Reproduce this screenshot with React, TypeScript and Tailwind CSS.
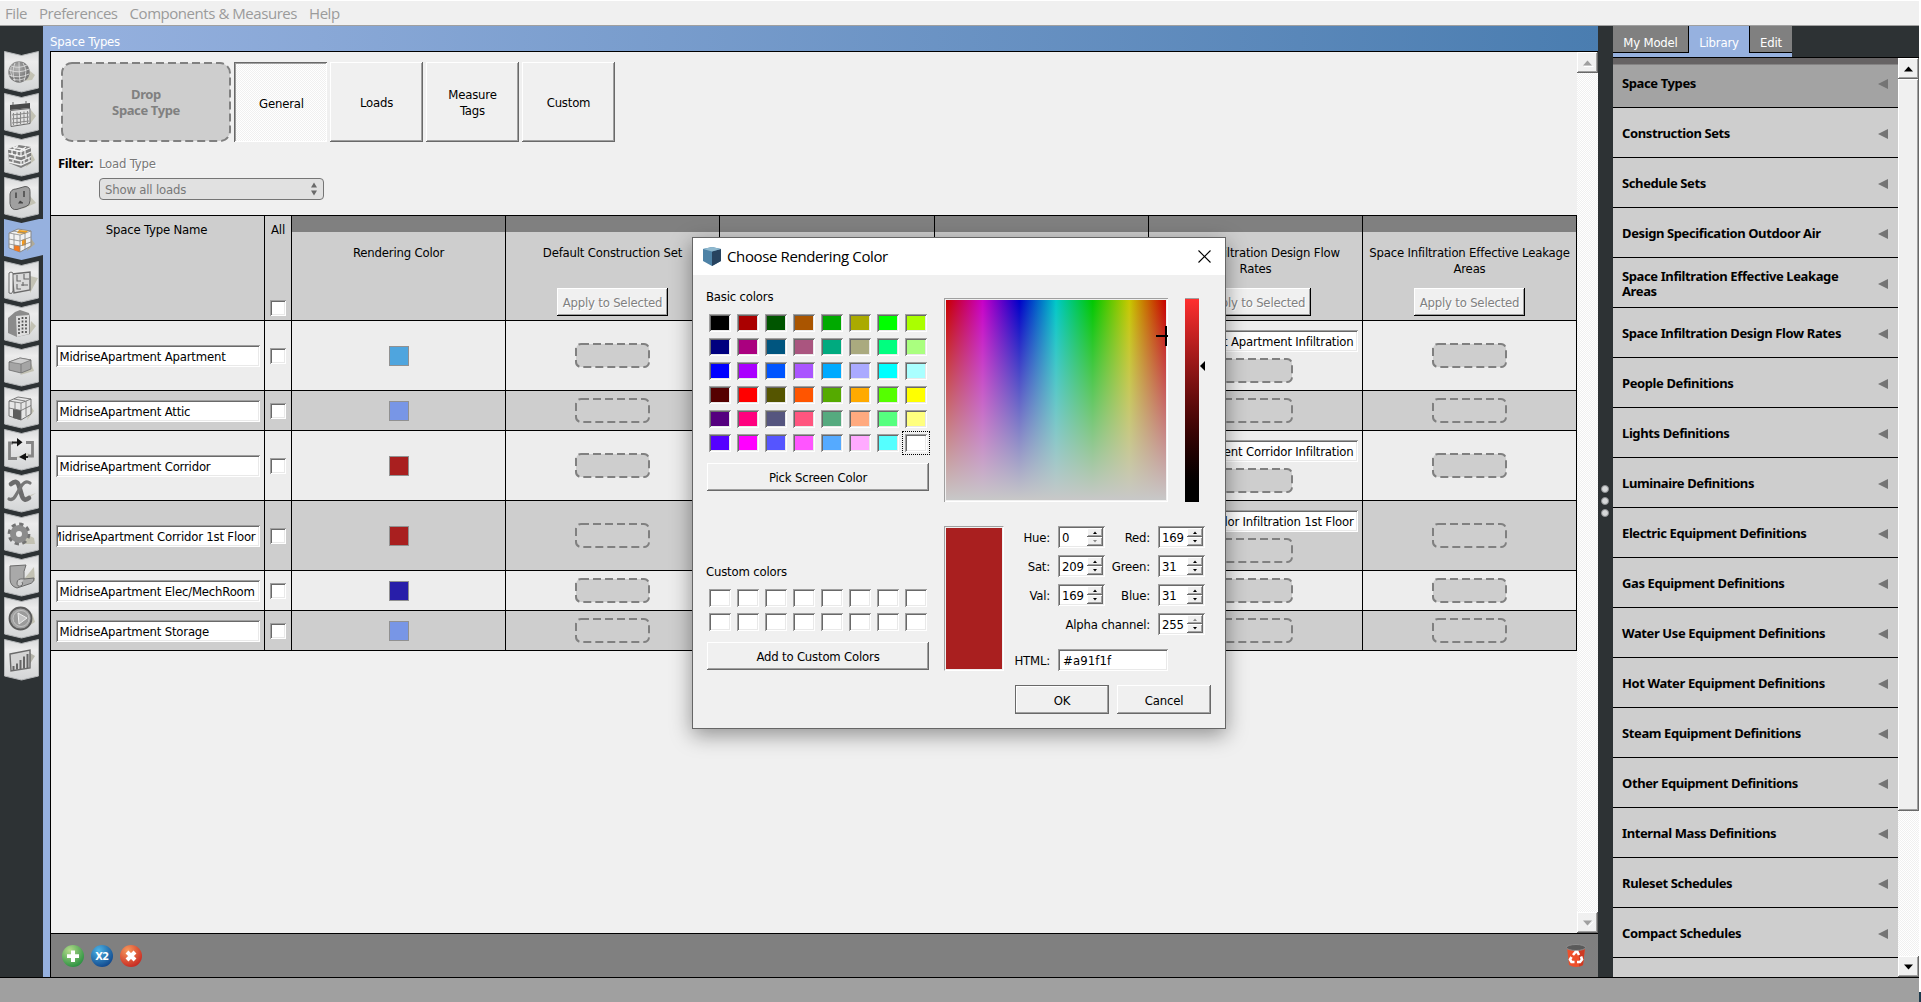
import type { ReactNode } from 'react';

const SUNKEN =
  'shadow-[inset_1px_1px_#a0a0a0,inset_-1px_-1px_#fff,inset_2px_2px_#696969,inset_-2px_-2px_#e9e9e9]';
const RAISED = 'bg-[#f0f0f0] shadow-[inset_-1px_-1px_#696969,inset_1px_1px_#fff,inset_-2px_-2px_#a0a0a0]';
const DITHER = 'bg-[repeating-conic-gradient(#ffffff_0_25%,#f0f0f0_0_50%)] bg-[length:2px_2px]';
const BOLD = 'font-["Noto_Sans",sans-serif] font-bold tracking-[-0.39px]';

/* ---------- side bar ---------- */

const G = '#6a6a6a';
const ICONS: ReactNode[] = [
  <g key="globe">
    <path d="M22 30 L32 29 L35 24 L30 20Z" fill="#c3c2b4" />
    <circle cx="19" cy="21" r="10.7" fill="url(#ball)" />
    <path d="M9 19q10 4 20-1M9 24q10 4 20-1M11 15q8 3 16-1M13 28.500q6 1.500 12-1M15 12q-4 9 0 18M19 11q0 10 1 20M23 12q5 8 1 18M11 16q-1 6 1 10" fill="none" stroke="#e2e2e2" strokeWidth=".8" />
  </g>,
  <g key="calendar">
    <path d="M30 31 L36 23 L31 17Z" fill="#c3c2b4" />
    <path d="M10 12l20-2v5l-20 2z" fill="#4a4a4a" />
    <path d="M10.500 17.500l19.500-2v15l-19 3z" fill="#e4e4e4" stroke={G} />
    <path d="M13.500 20v12M17 19.500v12M20.500 19v12M24 18.500v12M27.500 18v12M12 22l17-2M12 26l17-2M12 30l17-2" stroke="#8a8a8a" strokeWidth="1.100" />
    <path d="M13 9v3M26 8v3" stroke={G} />
  </g>,
  <g key="bricks">
    <path d="M26 32 L35 25 L31 17Z" fill="#c3c2b4" />
    <path d="M8 14l11-4 12 2v16l-10 5-12-5z" fill="#808080" />
    <path d="M8 14l13 2.500 10-4M8.500 18.500l12.500 3 10-4.500M9 23l12 3 10-4.500M9 27l12 3 10-4.500M21 16v5M15 20v4.500M21 26v4M26 19v5M12 15v4M17 16v4M13 25v4M25 14.500v5M29 22v4M24 24v4M13 12l12 2.500M18 10.500l-5 4.500M26 12l-6 4" fill="none" stroke="#f1f1f1" strokeWidth="1.300" />
  </g>,
  <g key="outlet">
    <path d="M22 32 L36 26 L30 19Z" fill="#c3c2b4" />
    <path d="M10 17q1-5 6-5l9-2.500q5 0 5 5v9q0 5-4 6l-9 3q-6 1-7-6z" fill="#a0a0a0" stroke="#5c5c5c" />
    <path d="M16 15.500v5.500M24 14v6" stroke="#444" strokeWidth="1.500" />
    <path d="M18 26.500l2-3 3 2v1z" fill="#444" />
  </g>,
  <g key="space">
    <path d="M27 32 L35 25 L30 18Z" fill="#b0aa98" />
    <path d="M9 14l9-4 13 2v15l-11 6-11-4z" fill="#f2f2f2" stroke="#888" />
    <path d="M19 11l9 1-3 3-8-1z" fill="#f5a21c" />
    <path d="M22 21l4-1v6l-4 1z" fill="#f89b1c" />
    <path d="M14 26l6 1v6l-6-2z" fill="#f47b20" />
    <path d="M20 16v17M9 14l11 2 11-4M14 15v15M25 15v16M9 20l11 2 11-4M9 25l11 2 11-4M13 12l12 2" fill="none" stroke="#888" strokeWidth=".8" />
  </g>,
  <g key="plan">
    <path d="M30 32 L38 17 L30 15Z" fill="#c3c2b4" />
    <path d="M12 13l18-2v18l-16 3z" fill="#dadada" stroke={G} strokeWidth="1.400" />
    <path d="M9 12q2-2 4 0v18q-1 4-4 2z" fill="#eee" stroke={G} />
    <path d="M17 14v6h4M17 23v5h4M24 13v5h5M21 24h7M23 21v4" fill="none" stroke="#666" strokeWidth="1.100" />
  </g>,
  <g key="building">
    <path d="M29 32 L36 23 L31 18Z" fill="#c3c2b4" />
    <path d="M8 15l7-6 5-2 9 3 1 4v17l-13 3-9-4z" fill="#8b8b8b" />
    <path d="M16 13l13-1v19l-12 3z" fill="#dedede" />
    <path d="M19 15v17M22.500 14v17M26 14v16" stroke="#555" strokeWidth="1.700" strokeDasharray="2 1.500" />
  </g>,
  <g key="box">
    <path d="M20 30 L34 26 L31 18Z" fill="#c3c2b4" />
    <path d="M9 17l11-4 11 2v9l-10 4-12-3z" fill="#a5a5a5" stroke={G} strokeWidth=".8" />
    <path d="M9 17l11-4 11 2-10 4z" fill="#cfcfcf" stroke={G} strokeWidth=".6" />
    <path d="M21 19v9" stroke={G} strokeWidth=".7" />
  </g>,
  <g key="zones">
    <path d="M27 33 L34 24 L30 18Z" fill="#c3c2b4" />
    <path d="M9 14l9-4 13 2v15l-10 6-12-4z" fill="#e6e6e6" stroke={G} strokeWidth=".9" />
    <path d="M13 22l8 1.500v9.500l-8-2z" fill="#5d5d5d" />
    <path d="M9 14l12 2 10-4M21 16v17M15 15v7M26 14v15M9 21l12 2.500 10-5M14 12l11 2" fill="none" stroke={G} strokeWidth=".8" />
  </g>,
  <g key="loop">
    <path d="M10 30 L28 24 L34 31 L30 27Z" fill="#cfcfc8" />
    <path d="M17 29.500H9.500V14H13M26 13.500h6.500V27H28" fill="none" stroke="#858585" strokeWidth="2.800" />
    <path d="M12 13.500h6M22 28h6" stroke="#222" strokeWidth="1.800" />
    <path d="M17 9l5.500 4.200-5.500 4.300zM26 24v7.500l-7-3.500z" fill="#111" />
  </g>,
  <g key="variable">
    <path d="M22 27 L36 22 L24 30Z" fill="#c9c8bf" />
    <path d="M11 13q6-5 8 2l3 10q2 6 7 2" fill="none" stroke="#6b6b6b" strokeWidth="4.600" strokeLinecap="round" />
    <path d="M30 12q-4-3-8 2l-6 10q-3 6-7 4" fill="none" stroke="#777" strokeWidth="3.200" strokeLinecap="round" />
  </g>,
  <g key="gear">
    <path d="M22 31 L35 31 L34 25 L28 22Z" fill="#c3c2b4" />
    <circle cx="19" cy="21" r="9.700" fill="none" stroke="#737373" strokeWidth="3.400" strokeDasharray="4.200 3.400" />
    <circle cx="19" cy="21" r="6" fill="#eee" stroke="#8c8c8c" strokeWidth="6" />
  </g>,
  <g key="scroll">
    <path d="M24 24 L34 12 L35 26Z" fill="#c3c2b4" />
    <path d="M10 11l16-1q-3 6-2 14l10-1q0 5-5 6l-12 4q-7-2-7-9z" fill="#a9a9a9" stroke={G} />
    <path d="M24 24q-7-1-7 4 0 4 4 3 3-2 1-4" fill="#ccc" stroke={G} />
  </g>,
  <g key="run">
    <path d="M24 32 L35 25 L32 16Z" fill="#c3c2b4" />
    <circle cx="20.500" cy="21.500" r="11" fill="#a3a3a3" stroke="#5c5c5c" strokeWidth="1.800" />
    <circle cx="21" cy="21.500" r="8" fill="#9b9b9b" stroke="#ccc" strokeWidth=".8" />
    <path d="M18 16l9 5-8 6z" fill="#c4c4c4" stroke="#eee" />
  </g>,
  <g key="chart">
    <path d="M26 31 L35 17 L30 14Z" fill="#b5b4aa" />
    <path d="M10 15l20-4v18l-19 3z" fill="#d4d4d4" stroke={G} strokeWidth="1.400" />
    <path d="M13.500 31v-4M17 30.500v-6M20.500 30v-9M24 29.500v-12M27.500 29v-14" stroke="#666" strokeWidth="2" />
  </g>,
];

function SideBar() {
  return (
    <div className="flex w-[43px] shrink-0 flex-col bg-[#2d3234] pt-[25px]">
      {ICONS.map((icon, i) => (
        <svg key={i} width="43" height="42" className="block shrink-0">
          <defs>
            <linearGradient id="tab" x1="0" y1="0" x2="0" y2="1">
              <stop offset="0" stopColor="#d9dadb" />
              <stop offset=".25" stopColor="#ececec" />
              <stop offset="1" stopColor="#d3d5d6" />
            </linearGradient>
            <radialGradient id="ball" cx=".4" cy=".35">
              <stop offset="0" stopColor="#b4b4b4" />
              <stop offset="1" stopColor="#7a7a7a" />
            </radialGradient>
          </defs>
          {i === 4 ? (
            <path d="M4 0L21.500 4L39 0H43V36L39 37L21.500 41L4 37Z" fill="#96b1df" />
          ) : (
            <path d="M4.500 .5L21.500 4.500L38.500 .5V37L21.500 41L4.500 37Z" fill="url(#tab)" stroke="#b4b6b8" />
          )}
          {icon}
        </svg>
      ))}
    </div>
  );
}

/* ---------- small controls ---------- */

function DropZone({ w, h, r }: { w: number; h: number; r: number }) {
  return (
    <svg width={w} height={h} className="block shrink-0">
      <rect x="1" y="1" width={w - 2} height={h - 2} rx={r} fill="#cecece" stroke="#808080" strokeWidth="2" strokeDasharray="8 4" />
    </svg>
  );
}

function ScrollButton({ dir, off }: { dir: 'up' | 'down'; off?: boolean }) {
  return (
    <div className={`flex h-[21px] w-full shrink-0 items-center justify-center ${RAISED}`}>
      <svg width="12" height="8">
        {off && <path d={dir === 'up' ? 'M2 7.500h9.500' : 'M6.500 7.500L11.500 2.500'} stroke="#fff" />}
        <path d={dir === 'up' ? 'M1 6.500h9L5.500 1.500z' : 'M1 1.500h9L5.500 6.500z'} fill={off ? '#a0a0a0' : '#000'} />
      </svg>
    </div>
  );
}

function CheckBox() {
  return <div className={`size-4 shrink-0 bg-white ${SUNKEN}`} />;
}

function NameField({ text, right }: { text: string; right?: boolean }) {
  return (
    <div className={`flex h-[22px] w-[204px] shrink-0 bg-white p-[2px] ${SUNKEN}`}>
      <div className={`flex w-full items-center overflow-hidden pt-[2px] whitespace-nowrap ${right ? 'justify-end pr-[2px]' : 'pl-[2px]'}`}>
        <span>{text}</span>
      </div>
    </div>
  );
}

/* ---------- table ---------- */

const COLS = 'grid grid-cols-[214px_27px_214px_214px_215px_214px_214px_214px]';
const HEADERS = ['Rendering Color', 'Default Construction Set', '', '', 'Space Infiltration Design Flow Rates', 'Space Infiltration Effective Leakage Areas'];
const ROWS = [
  { name: 'MidriseApartment Apartment', swatch: 'bg-[#4fa5de]', h: 'h-[70px]', bg: 'bg-[#ededed]', inf: 'MidriseApartment Apartment Infiltration' },
  { name: 'MidriseApartment Attic', swatch: 'bg-[#7896e6]', h: 'h-[40px]', bg: 'bg-[#cecece]' },
  { name: 'MidriseApartment Corridor', swatch: 'bg-[#a91f1f]', h: 'h-[70px]', bg: 'bg-[#ededed]', inf: 'MidriseApartment Corridor Infiltration' },
  { name: 'MidriseApartment Corridor 1st Floor', swatch: 'bg-[#a91f1f]', h: 'h-[70px]', bg: 'bg-[#cecece]', inf: 'MidriseApartment Corridor Infiltration 1st Floor', right: true },
  { name: 'MidriseApartment Elec/MechRoom', swatch: 'bg-[#281ea9]', h: 'h-[40px]', bg: 'bg-[#ededed]' },
  { name: 'MidriseApartment Storage', swatch: 'bg-[#7896e6]', h: 'h-[40px]', bg: 'bg-[#cecece]' },
];

function Table() {
  const cell = 'flex items-center justify-center border-r border-b border-black';
  return (
    <div className="w-[1526px] border-t border-black">
      <div className={`${COLS} h-[105px] bg-[#cecece]`}>
        <div className="border-r border-b border-black pt-[6px] pr-[2px] text-center">Space Type Name</div>
        <div className="flex flex-col items-center border-r border-b border-black pt-[6px] pb-1">
          <span>All</span>
          <div className="mt-auto">
            <CheckBox />
          </div>
        </div>
        {HEADERS.map((h, i) => (
          <div key={i} className="flex flex-col items-center border-r border-b border-black pb-1">
            <div className="h-4 w-full bg-[#808080]" />
            <div className={`pt-[13px] text-center ${i === 4 ? 'px-4' : 'px-1'}`}>{h}</div>
            {i > 0 && (
              <div className="mt-auto flex h-7 w-[111px] items-center justify-center bg-[#f0f0f0] pt-[2px] text-[#808080] shadow-[inset_-1px_-1px_#000,inset_1px_1px_#fff,inset_-2px_-2px_#a0a0a0] [text-shadow:1px_1px_#fff]">
                {h && 'Apply to Selected'}
              </div>
            )}
          </div>
        ))}
      </div>
      {ROWS.map((r) => (
        <div key={r.name} className={`${COLS} ${r.h} ${r.bg}`}>
          <div className={`${cell} pt-px`}>
            <NameField text={r.name} right={r.right} />
          </div>
          <div className={`${cell} pt-px`}>
            <CheckBox />
          </div>
          <div className={`${cell} pt-px`}>
            <div className={`size-5 border border-[#919191] ${r.swatch}`} />
          </div>
          {[0, 1, 2, 3, 4].map((c) => (
            <div key={c} className={`${cell} flex-col gap-[6px] ${c === 3 && r.inf ? 'pt-[2px]' : ''}`}>
              {c === 3 && r.inf && <NameField text={r.inf} right />}
              <DropZone w={75} h={25} r={5} />
            </div>
          ))}
        </div>
      ))}
    </div>
  );
}

/* ---------- main area ---------- */

function RoundIcon({ id, from, to, children }: { id: string; from: string; to: string; children: ReactNode }) {
  return (
    <svg width="22" height="22" className="block">
      <defs>
        <radialGradient id={id} cx=".35" cy=".25" r=".85">
          <stop offset="0" stopColor={from} />
          <stop offset="1" stopColor={to} />
        </radialGradient>
      </defs>
      <circle cx="11" cy="11" r="11" fill={`url(#${id})`} />
      {children}
    </svg>
  );
}

function Main() {
  const tab = 'flex w-[93px] items-center justify-center text-center';
  return (
    <div className="flex w-[1555px] shrink-0 flex-col border-l-[7px] border-[#96b1df]">
      <div className="flex h-[25px] shrink-0 items-end bg-linear-to-r from-[#96b1df] to-[#4a7db0] pb-px text-white">Space Types</div>
      <div className="flex min-h-0 grow flex-col border-t border-l border-black">
        <div className="flex h-[881px] shrink-0">
          <div className="w-[1526px] bg-[#f0f0f0]">
            <div className="flex h-[90px] gap-[3px] pt-[10px] pl-[10px]">
              <div className="relative h-20 w-[170px]">
                <DropZone w={170} h={80} r={10} />
                <div className={`absolute inset-0 flex items-center justify-center text-center text-[#808080] ${BOLD}`}>
                  Drop
                  <br />
                  Space Type
                </div>
              </div>
              <div className={`${tab} ${DITHER} pt-[3px] pl-[2px] shadow-[inset_1px_1px_#696969,inset_-1px_-1px_#fff,inset_2px_2px_#a0a0a0]`}>General</div>
              <div className={`${tab} ${RAISED} pt-[2px]`}>Loads</div>
              <div className={`${tab} ${RAISED} pt-[2px]`}>
                Measure
                <br />
                Tags
              </div>
              <div className={`${tab} ${RAISED} pt-[2px]`}>Custom</div>
            </div>
            <div className="flex h-[73px] gap-[5px] pt-[13px] pl-[7px]">
              <div className={`w-9 ${BOLD}`}>Filter:</div>
              <div className="pt-px text-[#787878]">
                <div className="[text-shadow:1px_1px_#fff]">Load Type</div>
                <div className="mt-[6px] flex h-[22px] w-[225px] items-center justify-between rounded-[4px] border border-[#757575] bg-[#e1e1e1] px-[5px]">
                  <span className="pt-[2px]">Show all loads</span>
                  <svg width="8" height="14">
                    <path d="M1 5.500h6L4 .5zM1 8.500h6L4 13.500z" fill="#6a6a6a" />
                  </svg>
                </div>
              </div>
            </div>
            <Table />
          </div>
          <div className={`flex w-[21px] flex-col justify-between ${DITHER}`}>
            <ScrollButton dir="up" off />
            <ScrollButton dir="down" off />
          </div>
        </div>
        <div className="flex grow items-center justify-between border-t border-black bg-[#808080] pr-3 pl-[11px]">
          <div className="flex gap-[7px]">
            <RoundIcon id="green" from="#b5dc8c" to="#1f8a3a">
              <path d="M9 5.500h4v3.700h4v3.700h-4v4H9v-4H5V9.200h4z" fill="#fff" />
            </RoundIcon>
            <RoundIcon id="blue" from="#4cb4e6" to="#0c3f86">
              <text x="11" y="15" textAnchor="middle" fontSize="11" fontWeight="bold" fill="#fff" fontFamily="DejaVu Sans Condensed" letterSpacing="-.6">
                X2
              </text>
            </RoundIcon>
            <RoundIcon id="red" from="#f79a5c" to="#c41f1c">
              <path d="M7 7l8 8M15 7l-8 8" stroke="#fff" strokeWidth="4" />
            </RoundIcon>
          </div>
          <svg width="20" height="24">
            <path d="M1 3h18l-2 18q-7 4-14 0z" fill="#ee4f2a" />
            <path d="M13 4l6-1-2 18q-2 1-4 1.500z" fill="#cf3a22" />
            <ellipse cx="10" cy="3.500" rx="9.500" ry="3" fill="#5a5a5a" stroke="#8d8d8d" />
            <g fill="none" stroke="#fff" strokeWidth="2.600">
              <path d="M7 11l2.500-3h2l1.500 3" />
              <path d="M15 12.500l1 3-2 2.500h-3" />
              <path d="M8.500 18H5.500L4 15.500l1.500-2.500" />
            </g>
          </svg>
        </div>
      </div>
    </div>
  );
}

/* ---------- library panel ---------- */

const LIBRARY = [
  'Space Types', 'Construction Sets', 'Schedule Sets', 'Design Specification Outdoor Air', 'Space Infiltration Effective Leakage Areas',
  'Space Infiltration Design Flow Rates', 'People Definitions', 'Lights Definitions', 'Luminaire Definitions', 'Electric Equipment Definitions',
  'Gas Equipment Definitions', 'Water Use Equipment Definitions', 'Hot Water Equipment Definitions', 'Steam Equipment Definitions',
  'Other Equipment Definitions', 'Internal Mass Definitions', 'Ruleset Schedules', 'Compact Schedules',
];

function Library() {
  return (
    <div className="flex w-[306px] shrink-0 flex-col">
      <div className="flex h-8 shrink-0 flex-col border-b border-black bg-[#2d3234] text-white">
        <div className="h-[31px] w-[179px] bg-[#96b1df]">
          <div className="flex h-[27px] leading-[33px]">
            <div className="w-[76px] border-r border-b border-black bg-[#808080] text-center">My Model</div>
            <div className="w-[60px] text-center">Library</div>
            <div className="w-[43px] border-b border-l border-black bg-[#808080] text-center">Edit</div>
          </div>
        </div>
      </div>
      <div className="flex min-h-0 grow">
        <div className="w-[285px] overflow-hidden bg-[#cecece]">
          {LIBRARY.map((t, i) => (
            <div
              key={t}
              className={`flex h-[50px] items-center justify-between border-b border-black pt-[2px] pr-[10px] pl-[9px] ${BOLD} leading-[15px] ${
                i === 0 ? 'bg-[linear-gradient(#666364_0_6px,#a3a3a3_7px)]' : ''
              }`}
            >
              <span className="w-[240px]">{t}</span>
              <svg width="10" height="10">
                <path d="M10 0v10L0 5z" fill="#747474" />
              </svg>
            </div>
          ))}
        </div>
        <div className={`flex w-[21px] flex-col ${DITHER}`}>
          <ScrollButton dir="up" />
          <div className={`h-[732px] ${RAISED}`} />
          <div className="grow" />
          <ScrollButton dir="down" />
        </div>
      </div>
    </div>
  );
}

/* ---------- colour dialog ---------- */

const BASIC = [
  'bg-[#000000]', 'bg-[#aa0000]', 'bg-[#005500]', 'bg-[#aa5500]', 'bg-[#00aa00]', 'bg-[#aaaa00]', 'bg-[#00ff00]', 'bg-[#aaff00]',
  'bg-[#00007f]', 'bg-[#aa007f]', 'bg-[#00557f]', 'bg-[#aa557f]', 'bg-[#00aa7f]', 'bg-[#aaaa7f]', 'bg-[#00ff7f]', 'bg-[#aaff7f]',
  'bg-[#0000ff]', 'bg-[#aa00ff]', 'bg-[#0055ff]', 'bg-[#aa55ff]', 'bg-[#00aaff]', 'bg-[#aaaaff]', 'bg-[#00ffff]', 'bg-[#aaffff]',
  'bg-[#550000]', 'bg-[#ff0000]', 'bg-[#555500]', 'bg-[#ff5500]', 'bg-[#55aa00]', 'bg-[#ffaa00]', 'bg-[#55ff00]', 'bg-[#ffff00]',
  'bg-[#55007f]', 'bg-[#ff007f]', 'bg-[#55557f]', 'bg-[#ff557f]', 'bg-[#55aa7f]', 'bg-[#ffaa7f]', 'bg-[#55ff7f]', 'bg-[#ffff7f]',
  'bg-[#5500ff]', 'bg-[#ff00ff]', 'bg-[#5555ff]', 'bg-[#ff55ff]', 'bg-[#55aaff]', 'bg-[#ffaaff]', 'bg-[#55ffff]', 'bg-[#ffffff]',
];

function Swatches({ colors, focus }: { colors: string[]; focus?: number }) {
  return (
    <div className="ml-[3px] grid w-[218px] grid-cols-8 gap-[6px]">
      {colors.map((c, i) => (
        <div key={i} className={`relative h-[18px] ${c} ${SUNKEN}`}>
          {i === focus && <div className="absolute -inset-[3px] border border-dotted border-black" />}
        </div>
      ))}
    </div>
  );
}

function Spin({ value, noUp, noDown }: { value: string; noUp?: boolean; noDown?: boolean }) {
  const b = `flex grow items-center justify-center ${RAISED}`;
  return (
    <div className={`flex h-[22px] w-[47px] justify-between bg-white p-[2px] ${SUNKEN}`}>
      <span className="pl-[2px] leading-[19px]">{value}</span>
      <div className="flex h-[18px] w-4 flex-col">
        <div className={b}>
          <svg width="5" height="3">
            <path d="M0 3h4L2 .5z" fill={noUp ? '#888' : '#000'} />
          </svg>
        </div>
        <div className={b}>
          <svg width="5" height="3">
            <path d="M0 0h4L2 2.500z" fill={noDown ? '#888' : '#000'} />
          </svg>
        </div>
      </div>
    </div>
  );
}

function Field({ label, labelClass, children }: { label: string; labelClass: string; children: ReactNode }) {
  return (
    <div className="flex h-[22px] gap-2">
      <span className={`${labelClass} text-right leading-[23px] whitespace-nowrap`}>{label}</span>
      {children}
    </div>
  );
}

function ColorDialog() {
  const button = `flex items-center justify-center pt-[2px] ${RAISED}`;
  return (
    <div className="absolute top-[237px] left-[692px] flex h-[492px] w-[534px] flex-col border border-[#666] bg-[#f0f0f0] shadow-[0_6px_20px_rgba(0,0,0,0.4)]">
      <div className="flex h-[37px] shrink-0 items-center bg-white pr-[14px] pl-[10px]">
        <svg width="18" height="19">
          <path d="M0 2l9-2 9 2v12l-9 5-9-5z" fill="#4d82a6" />
          <path d="M9 4.500l9-2.500v12l-9 5z" fill="#27435f" />
          <path d="M0 2l9-2 9 2-9 2.500z" fill="#8fb9cf" />
        </svg>
        <span className='grow pb-[2px] pl-[6px] font-["Open_Sans",sans-serif] text-[15px] tracking-[-0.38px]'>Choose Rendering Color</span>
        <svg width="13" height="13">
          <path d="M.5 .5l12 12M12.500 .5l-12 12" stroke="#000" strokeWidth="1.100" />
        </svg>
      </div>
      <div className="flex">
        <div className="w-[251px] pt-[14px] pl-[13px]">
          <div>Basic colors</div>
          <div className="h-[9px]" />
          <Swatches colors={BASIC} focus={47} />
          <div className={`${button} mt-[11px] ml-px h-7 w-[222px]`}>Pick Screen Color</div>
          <div className="mt-[73px] mb-[9px]">Custom colors</div>
          <Swatches colors={Array(16).fill('bg-white')} />
          <div className={`${button} mt-[11px] ml-px h-7 w-[222px]`}>Add to Custom Colors</div>
        </div>
        <div className="pt-[23px]">
          <div className="flex">
            <div className="relative mr-[17px] h-[204px] w-[224px] p-[2px] shadow-[inset_1px_1px_#a0a0a0,inset_-1px_-1px_#fff]">
              <div className="h-full bg-[linear-gradient(to_bottom,rgba(200,200,200,0),#c8c8c8),linear-gradient(to_right,#c80000,#c800c8,#0000c8,#00c8c8,#00c800,#c8c800,#c80000)]" />
              <div className="absolute top-[37px] right-0 h-[2px] w-3 bg-black" />
              <div className="absolute top-7 right-px h-5 w-[2px] bg-black" />
            </div>
            <div className="h-[204px] w-[14px] border-t border-[#a0a0a0] bg-linear-to-b from-[#ff2f2f] to-black" />
            <svg width="6" height="10" className="mt-[63px] ml-px">
              <path d="M5 0v10L0 5z" fill="#000" />
            </svg>
          </div>
          <div className="mt-6 flex">
            <div className="h-[145px] w-[60px] border-t border-r border-b border-l border-t-[#a0a0a0] border-r-white border-b-white border-l-[#a0a0a0] bg-[#a91f1f] shadow-[inset_0_0_0_1px_#f0f0f0]" />
            <div className="flex flex-col gap-[7px]">
              <div className="flex">
                <Field label="Hue:" labelClass="w-[46px]"><Spin value="0" noDown /></Field>
                <Field label="Red:" labelClass="w-[45px]"><Spin value="169" /></Field>
              </div>
              <div className="flex">
                <Field label="Sat:" labelClass="w-[46px]"><Spin value="209" /></Field>
                <Field label="Green:" labelClass="w-[45px]"><Spin value="31" /></Field>
              </div>
              <div className="flex">
                <Field label="Val:" labelClass="w-[46px]"><Spin value="169" /></Field>
                <Field label="Blue:" labelClass="w-[45px]"><Spin value="31" /></Field>
              </div>
              <Field label="Alpha channel:" labelClass="w-[146px]"><Spin value="255" noUp /></Field>
              <div className="mt-[7px]">
                <Field label="HTML:" labelClass="w-[46px]">
                  <div className={`h-[22px] w-[110px] bg-white pl-[5px] leading-[23px] tracking-[0.1px] ${SUNKEN}`}>#a91f1f</div>
                </Field>
              </div>
            </div>
          </div>
          <div className="mt-[14px] flex gap-2 pl-[71px]">
            <div className="flex h-[29px] w-[94px] items-center justify-center border border-[#696969] bg-[#f0f0f0] pt-[2px] shadow-[inset_-1px_-1px_#a0a0a0,inset_1px_1px_#fff]">OK</div>
            <div className={`${button} h-[29px] w-[94px]`}>Cancel</div>
          </div>
        </div>
      </div>
    </div>
  );
}

export default function App() {
  return (
    <div className='relative flex h-[1002px] w-[1921px] overflow-hidden bg-white font-["DejaVu_Sans_Condensed",sans-serif] text-[13px] leading-4 tracking-[-0.19px] text-black'>
      <div className="flex w-[1919px] flex-col">
        <div className='flex h-[26px] shrink-0 items-center gap-3 border-t border-b border-t-white border-b-[#a0a0a0] bg-[#f0f0f0] pl-[5px] font-["Open_Sans",sans-serif] text-[15px] tracking-[-0.45px] text-[#9b9b9b]'>
          <span>File</span>
          <span>Preferences</span>
          <span>Components &amp; Measures</span>
          <span>Help</span>
        </div>
        <div className="flex h-[951px] shrink-0">
          <SideBar />
          <Main />
          <div className="flex w-[15px] shrink-0 flex-col items-center justify-center gap-1 bg-[#2d3234] pr-px pb-[2px]">
            <div className="size-2 rounded-full border border-[#8b8e90] bg-[#d6d8d9]" />
            <div className="size-2 rounded-full border border-[#8b8e90] bg-[#d6d8d9]" />
            <div className="size-2 rounded-full border border-[#8b8e90] bg-[#d6d8d9]" />
          </div>
          <Library />
        </div>
        <div className="grow border-t border-black bg-[#a0a0a0]" />
      </div>
      <div className="mt-auto h-[10px] w-[2px] bg-[#1d3a4c]" />
      <ColorDialog />
    </div>
  );
}
